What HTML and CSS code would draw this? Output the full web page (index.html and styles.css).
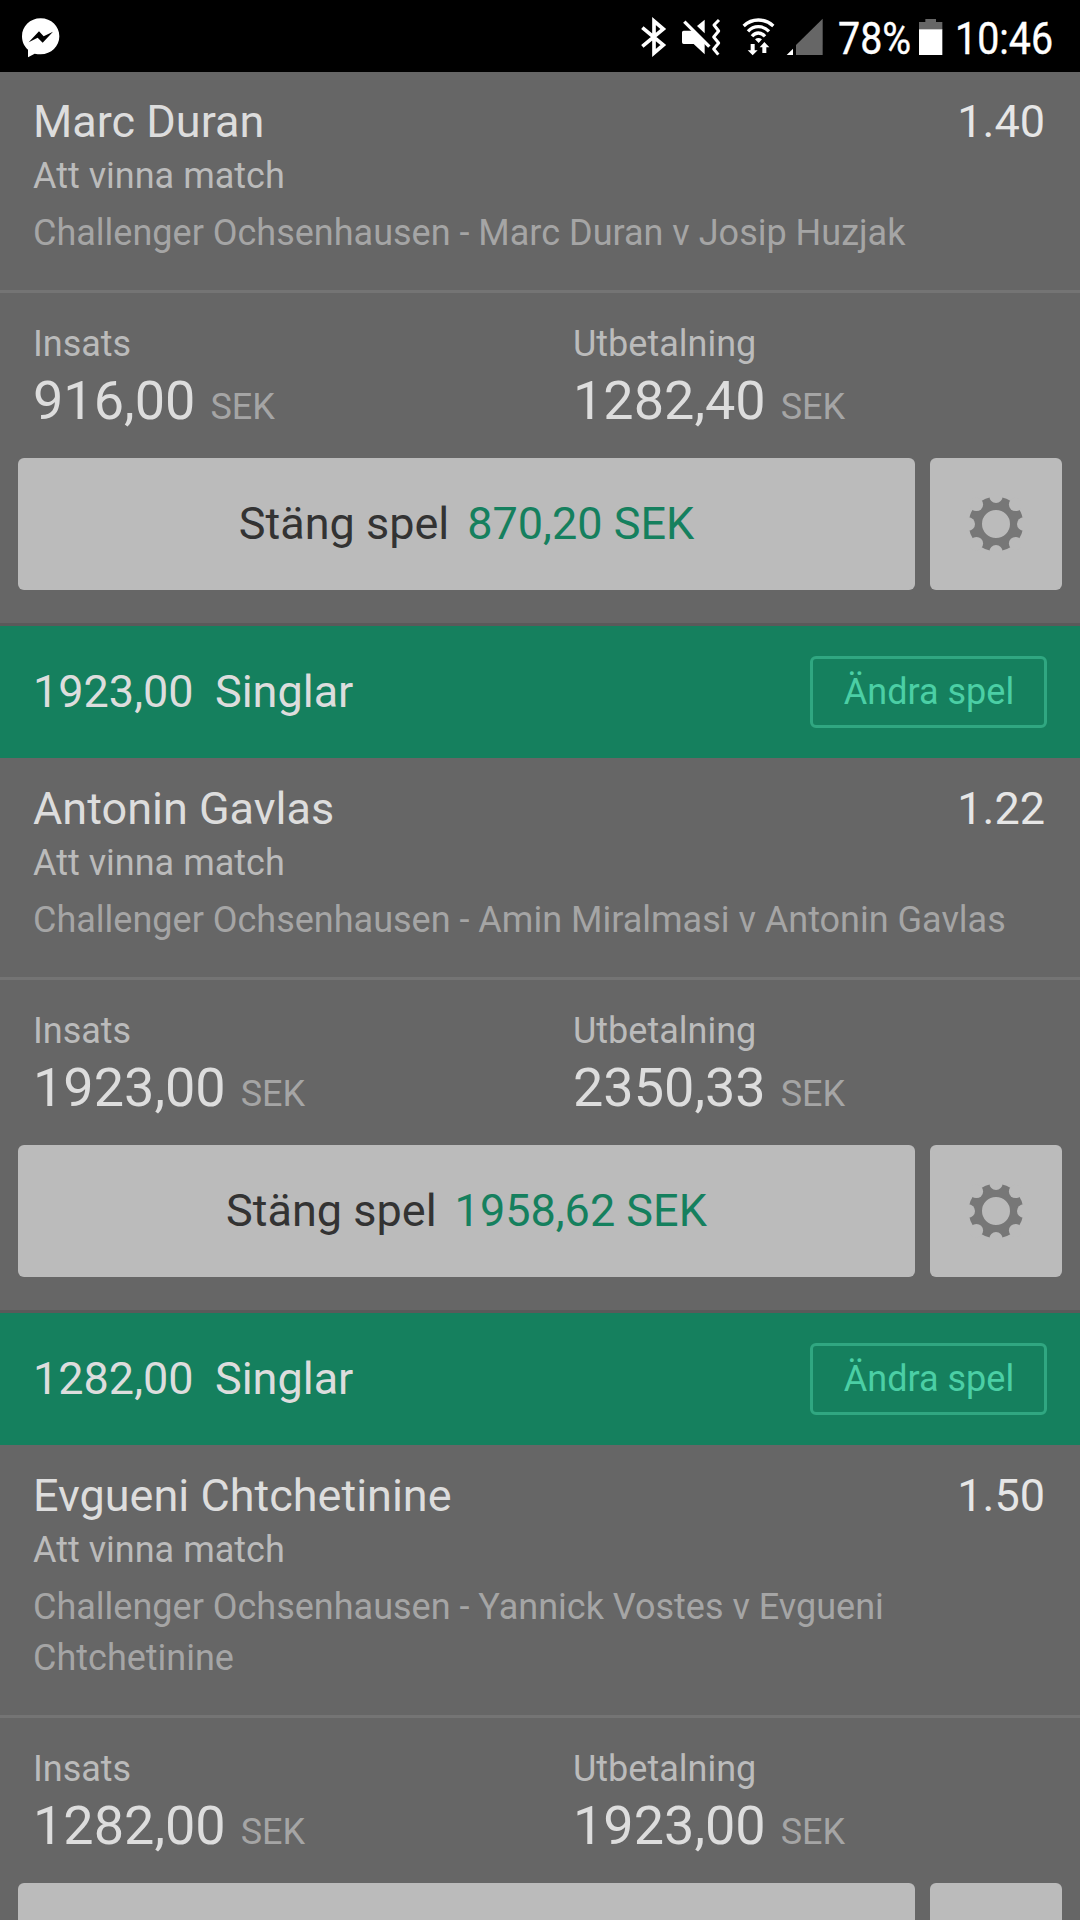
FILE: index.html
```html
<!DOCTYPE html>
<html lang="sv">
<head>
<meta charset="utf-8">
<title>Mina spel</title>
<link rel="stylesheet" href="styles.css">
</head>
<body>
<svg class="defs" width="0" height="0" aria-hidden="true">
  <symbol id="gear" viewBox="-84 -84 168 168">
    <circle r="62" fill="none" stroke="#777" stroke-width="40"/>
    <g fill="#bbb">
      <circle cx="0" cy="-83" r="20"/><circle cx="0" cy="83" r="20"/>
      <circle cx="-83" cy="0" r="20"/><circle cx="83" cy="0" r="20"/>
      <circle cx="58.7" cy="-58.7" r="20"/><circle cx="58.7" cy="58.7" r="20"/>
      <circle cx="-58.7" cy="-58.7" r="20"/><circle cx="-58.7" cy="58.7" r="20"/>
    </g>
  </symbol>
</svg>

<header class="status">
  <svg class="messenger" viewBox="63 51 120 123">
    <path fill="#fff" d="M122 55C90 55 66 79 66 109c0 17 7 31 18 40v23l20-11c6 1 12 2 18 2 32 0 56-24 56-54s-24-54-56-54z"/>
    <path fill="#000" d="M86 127l31-33 14 15 28-14-31 33-15-15z"/>
  </svg>
  <div class="status-right">
    <svg class="bluetooth" viewBox="60 48 81 123">
      <path fill="none" stroke="#fff" stroke-width="11" d="M67 83l63 52-28 24V63l28 24-63 52"/>
    </svg>
    <svg class="mute" viewBox="183 48 120 123">
      <g fill="#fff">
        <path d="M191 92h31l32 32v39l-33-31h-30q-5 0-5-5V97q0-5 5-5z"/>
        <path d="M254 59v41l-23-22z"/>
      </g>
      <path fill="none" stroke="#fff" stroke-width="10" d="M193 65l75 75"/>
      <path fill="none" stroke="#fff" stroke-width="9" stroke-linejoin="round" d="M297 60l-15 15 14 18-15 18 15 18-15 18 14 17"/>
    </svg>
    <svg class="wifi" viewBox="366 48 99 123">
      <g fill="none" stroke="#fff" stroke-width="10">
        <path d="M371 78Q390 60 415 60T460 78"/>
        <path d="M384 94Q397 80 415 80T447 94"/>
        <path d="M396 109Q404 99 415 99T435 109"/>
      </g>
      <g fill="#fff">
        <path d="M405 118q10-8 21 0l-10 11z"/>
        <path d="M392 132h12v19h9l-15 15-15-15h9z"/>
        <path d="M427 159h12v-17h9l-15-16-14 16h8z"/>
      </g>
    </svg>
    <svg class="signal" viewBox="498 48 114 123">
      <path fill="#fff" d="M500 165l19-19v19z"/>
      <path fill="#666" d="M528 165v-30l80-79v109z"/>
    </svg>
    <span class="pct"><span class="narrow">78%</span></span>
    <svg class="battery" viewBox="894 48 75 123">
      <path fill="#666" d="M897 90V66h19v-9h32v9h19v24z"/>
      <path fill="#fff" d="M897 88h70v77h-70z"/>
    </svg>
    <span class="clock"><span class="narrow">10:46</span></span>
  </div>
</header>

<main class="bets">
  <section class="bet">
    <div class="selection">
      <div class="name-row"><span>Marc Duran</span><span class="odds">1.40</span></div>
      <div class="market">Att vinna match</div>
      <div class="event">Challenger Ochsenhausen - Marc Duran v Josip Huzjak</div>
    </div>
    <div class="figures">
      <div><div class="label">Insats</div><div class="amount">916,00<small>SEK</small></div></div>
      <div><div class="label">Utbetalning</div><div class="amount">1282,40<small>SEK</small></div></div>
    </div>
    <div class="actions">
      <button class="cashout">Stäng spel<b>870,20 SEK</b></button>
      <button class="settings" aria-label="Inställningar"><svg><use href="#gear"/></svg></button>
    </div>
  </section>

  <section class="bet">
    <div class="heading"><span class="stake">1923,00&nbsp; Singlar</span><button class="edit">Ändra spel</button></div>
    <div class="selection">
      <div class="name-row"><span>Antonin Gavlas</span><span class="odds">1.22</span></div>
      <div class="market">Att vinna match</div>
      <div class="event">Challenger Ochsenhausen - Amin Miralmasi v Antonin Gavlas</div>
    </div>
    <div class="figures">
      <div><div class="label">Insats</div><div class="amount">1923,00<small>SEK</small></div></div>
      <div><div class="label">Utbetalning</div><div class="amount">2350,33<small>SEK</small></div></div>
    </div>
    <div class="actions">
      <button class="cashout">Stäng spel<b>1958,62 SEK</b></button>
      <button class="settings" aria-label="Inställningar"><svg><use href="#gear"/></svg></button>
    </div>
  </section>

  <section class="bet">
    <div class="heading"><span class="stake">1282,00&nbsp; Singlar</span><button class="edit">Ändra spel</button></div>
    <div class="selection">
      <div class="name-row"><span>Evgueni Chtchetinine</span><span class="odds">1.50</span></div>
      <div class="market">Att vinna match</div>
      <div class="event">Challenger Ochsenhausen - Yannick Vostes v Evgueni Chtchetinine</div>
    </div>
    <div class="figures">
      <div><div class="label">Insats</div><div class="amount">1282,00<small>SEK</small></div></div>
      <div><div class="label">Utbetalning</div><div class="amount">1923,00<small>SEK</small></div></div>
    </div>
    <div class="actions cut">
      <button class="cashout"></button>
      <button class="settings" aria-label="Inställningar"></button>
    </div>
  </section>
</main>
</body>
</html>
```
FILE: styles.css
```css
* { box-sizing: border-box; }
html, body { margin: 0; height: 1920px; overflow: hidden; }
body {
  display: flex;
  flex-direction: column;
  width: 1080px;
  background: #666;
  color: #ddd;
  font-family: Roboto, "Liberation Sans", sans-serif;
  font-size: 36px;
  line-height: 51px;
}
.defs { display: none; }
button { border: 0; padding: 0; margin: 0; font: inherit; }
svg { display: block; flex: none; }

.status {
  position: relative;
  z-index: 1;
  flex: none;
  display: flex;
  justify-content: space-between;
  align-items: flex-start;
  height: 72px;
  padding: 16px 25px 0 21px;
  background: #000;
  color: #fff;
}
.status svg { height: 41px; }
.status .messenger { width: 40px; margin-top: 1px; }
.status-right { display: flex; width: 415px; }
.bluetooth { width: 27px; }
.mute { width: 40px; margin-left: 14px; }
.wifi { width: 33px; margin-left: 21px; }
.signal { width: 38px; margin-left: 11px; }
.battery { width: 25px; }
.pct, .clock { height: 41px; font-size: 45px; line-height: 45px; white-space: nowrap; }
.pct { width: 80px; margin-left: 14px; }
.clock { width: 100px; margin-left: 12px; }
.narrow {
  display: inline-block;
  transform: scaleX(0.875);
  transform-origin: 0 50%;
  -webkit-text-stroke: 0.4px #fff;
}

.bets { flex: none; margin-top: -1px; }
.heading {
  display: flex;
  align-items: center;
  justify-content: space-between;
  height: 135px;
  padding: 0 33px;
  border-top: 3px solid #5a5a5a;
  background: #15805e;
  font-size: 45px;
}
.stake { padding-bottom: 2px; word-spacing: -0.5px; }
.edit {
  width: 237px;
  height: 72px;
  padding-left: 1px;
  border: 3px solid #30a781;
  border-radius: 6px;
  background: transparent;
  color: #4bcfa5;
  font-size: 36px;
}
.selection { padding: 24px 33px 31px; border-bottom: 3px solid #747474; }
.name-row {
  display: flex;
  justify-content: space-between;
  font-size: 45px;
  line-height: 54px;
}
.odds { padding-right: 2px; color: #e6e6e6; }
.market { margin-top: 2px; color: #bbb; }
.event { margin-top: 6px; color: #a5a5a5; }
.figures {
  display: grid;
  grid-template-columns: 540px 1fr;
  padding: 26px 0 27px 33px;
}
.label { color: #bbb; }
.amount { margin-top: 1px; font-size: 54px; line-height: 60px; }
.amount small { margin-left: 15px; font-size: 36px; line-height: 1; color: #a5a5a5; }
.actions {
  display: flex;
  gap: 15px;
  padding: 0 18px 33px;
}
.cashout, .settings { height: 132px; border-radius: 6px; background: #bbb; }
.cashout { flex: 1; padding-bottom: 2px; font-size: 45px; color: #333; }
.cashout b { margin-left: 18px; font-weight: 400; color: #15805e; }
.settings { display: flex; align-items: center; justify-content: center; width: 132px; }
.settings svg { width: 56px; height: 56px; margin-right: 1px; }

/* the last row continues below the fold */
.actions.cut { padding-bottom: 0; }
.cut .cashout, .cut .settings { height: 37px; border-radius: 6px 6px 0 0; }
```
